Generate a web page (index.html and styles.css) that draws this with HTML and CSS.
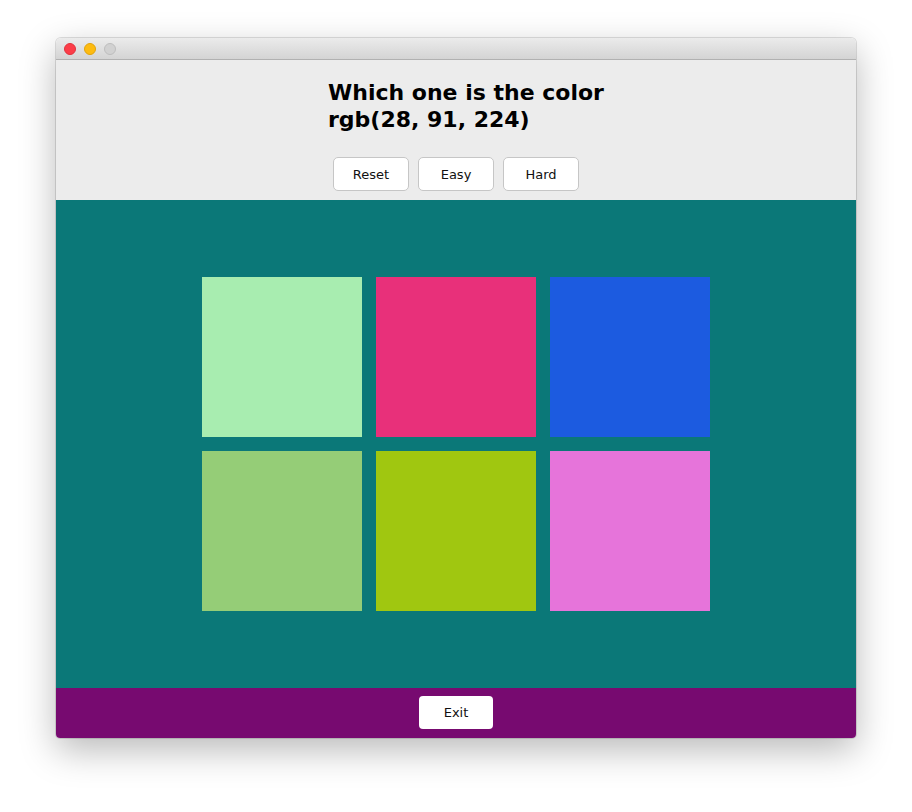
FILE: index.html
```html
<!DOCTYPE html>
<html>
<head>
<meta charset="utf-8">
<link rel="stylesheet" href="styles.css">
</head>
<body>
<div class="window">
  <div class="titlebar">
    <span class="light red"></span>
    <span class="light yellow"></span>
    <span class="light gray"></span>
  </div>
  <div class="top">
    <div class="question">Which one is the color<br>rgb(28, 91, 224)</div>
    <div class="buttons">
      <button class="btn">Reset</button>
      <button class="btn">Easy</button>
      <button class="btn">Hard</button>
    </div>
  </div>
  <div class="board">
    <div class="grid">
      <div class="sq c1"></div>
      <div class="sq c2"></div>
      <div class="sq c3"></div>
      <div class="sq c4"></div>
      <div class="sq c5"></div>
      <div class="sq c6"></div>
    </div>
  </div>
  <div class="bottom">
    <button class="exit">Exit</button>
  </div>
</div>
</body>
</html>
```
FILE: styles.css
```css
html, body {
  margin: 0;
  padding: 0;
  background: #ffffff;
}
body {
  width: 912px;
  height: 812px;
  overflow: hidden;
  padding-top: 38px;
  box-sizing: border-box;
  font-family: "DejaVu Sans", sans-serif;
}
.window {
  margin-left: 56px;
  width: 800px;
  height: 700px;
  display: flex;
  flex-direction: column;
  border-radius: 5px 5px 4px 4px;
  overflow: hidden;
  box-shadow: 0 12px 36px rgba(0,0,0,0.28), 0 0 0 1px rgba(0,0,0,0.12);
}
.titlebar {
  height: 21px;
  background: linear-gradient(#ebebeb, #d4d4d4);
  border-bottom: 1px solid #b1b1b1;
  display: flex;
  align-items: center;
  padding-left: 8px;
  gap: 8px;
}
.light {
  width: 12px;
  height: 12px;
  border-radius: 50%;
  box-sizing: border-box;
}
.red { background: #fc3d48; border: 1px solid #e0323c; }
.yellow { background: #fdbb10; border: 1px solid #e1a30b; }
.gray { background: #d1d1d1; border: 1px solid #bdbdbd; }
.top {
  height: 140px;
  background: #ececec;
  display: flex;
  flex-direction: column;
  box-sizing: border-box;
  padding-top: 19px;
}
.question {
  margin-left: 272px;
  font-weight: bold;
  font-size: 22px;
  line-height: 27px;
  color: #000;
}
.buttons {
  display: flex;
  justify-content: center;
  gap: 9px;
  margin-top: 24px;
}
.btn {
  width: 76px;
  height: 34px;
  background: #fff;
  border: 1px solid #c6c6c6;
  border-radius: 5px;
  font-family: "DejaVu Sans", sans-serif;
  font-size: 13px;
  color: #111;
  padding: 0;
}
.board {
  height: 488px;
  background: #0b7878;
  display: flex;
  align-items: center;
  justify-content: center;
}
.grid {
  display: grid;
  grid-template-columns: repeat(3, 160px);
  grid-auto-rows: 160px;
  gap: 14px;
}
.c1 { background: #a8edb0; }
.c2 { background: #e8307a; }
.c3 { background: #1c5be0; }
.c4 { background: #95cd77; }
.c5 { background: #a0c710; }
.c6 { background: #e674da; }
.bottom {
  flex: 1;
  background: #770a70;
  display: flex;
  justify-content: center;
  padding-top: 8px;
  box-sizing: border-box;
}
.exit {
  width: 74px;
  height: 33px;
  background: #fff;
  border: none;
  border-radius: 4px;
  font-family: "DejaVu Sans", sans-serif;
  font-size: 13px;
  color: #111;
  padding: 0;
}
```
